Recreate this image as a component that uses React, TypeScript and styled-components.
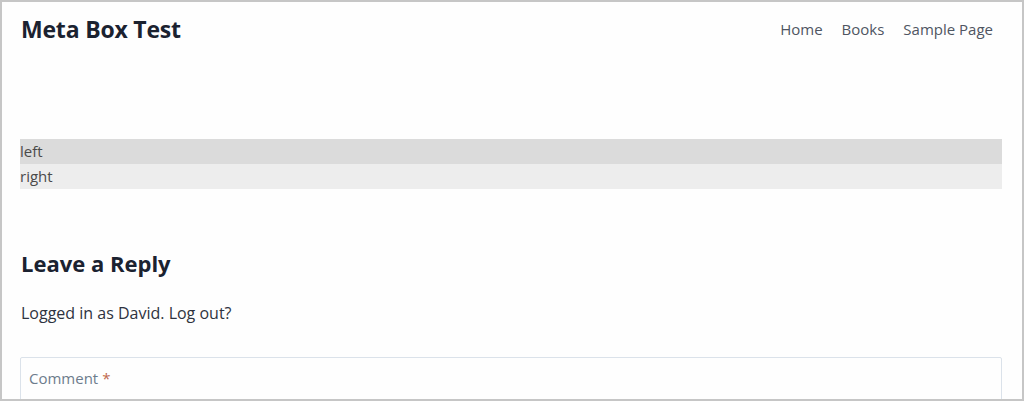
import React from 'react'
import styled, { createGlobalStyle } from 'styled-components'

const GlobalStyle = createGlobalStyle`
  html, body {
    margin: 0;
    padding: 0;
    background: #ffffff;
  }
  body {
    font-family: 'Open Sans', 'Noto Sans', sans-serif;
  }
`

const Frame = styled.div`
  box-sizing: border-box;
  width: 1024px;
  height: 401px;
  border: 2px solid #c6c6c6;
  overflow: hidden;
  background: #fefefe;
`

const Header = styled.header`
  display: flex;
  align-items: center;
  justify-content: space-between;
  height: 53px;
  padding: 0 29px 1px 19px;
`

const SiteTitle = styled.div`
  font-size: 23px;
  font-weight: 700;
  color: #1b2230;
  letter-spacing: -0.2px;
`

const Nav = styled.nav`
  display: flex;
  gap: 19px;
`

const NavLink = styled.a`
  font-size: 15px;
  color: #4f5562;
  text-decoration: none;
`

const Content = styled.main`
  padding: 83px 20px 0 18px;
`

const MetaRow = styled.div<{ shade: string }>`
  height: 25px;
  line-height: 25px;
  background: ${({ shade }) => shade};
  font-size: 15px;
  color: #4a4a4a;
`

const ReplyTitle = styled.h3`
  margin: 59px 0 0 1px;
  font-size: 22px;
  font-weight: 700;
  color: #1b2230;
  line-height: 30px;
`

const LoggedIn = styled.p`
  margin: 24px 0 0 1px;
  font-size: 16px;
  line-height: 22px;
  color: #2e3340;
`

const CommentBox = styled.div`
  margin-top: 33px;
  height: 60px;
  border: 1px solid #dbe2ea;
  border-radius: 2px;
  padding: 10px 8px;
  box-sizing: border-box;
  font-size: 15px;
  color: #6d7c8c;
`

const Required = styled.span`
  color: #c0684c;
`

export default function App() {
  return (
    <>
      <GlobalStyle />
      <Frame>
        <Header>
          <SiteTitle>Meta Box Test</SiteTitle>
          <Nav>
            <NavLink href="#">Home</NavLink>
            <NavLink href="#">Books</NavLink>
            <NavLink href="#">Sample Page</NavLink>
          </Nav>
        </Header>
        <Content>
          <MetaRow shade="#dbdbdb">left</MetaRow>
          <MetaRow shade="#ededed">right</MetaRow>
          <ReplyTitle>Leave a Reply</ReplyTitle>
          <LoggedIn>Logged in as David. Log out?</LoggedIn>
          <CommentBox>
            Comment <Required>*</Required>
          </CommentBox>
        </Content>
      </Frame>
    </>
  )
}
